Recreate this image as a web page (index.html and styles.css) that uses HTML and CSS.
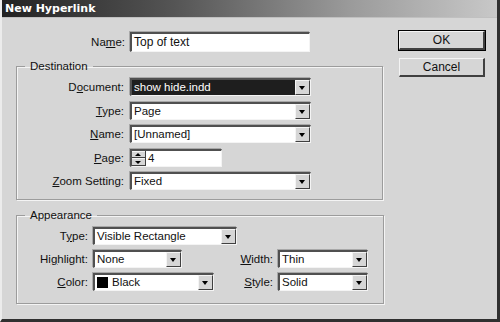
FILE: index.html
```html
<!DOCTYPE html>
<html lang="en">
<head>
    <meta charset="UTF-8">
    <title>New Hyperlink</title>
    <link rel="stylesheet" href="styles.css">
</head>
<body>
    <div class="dialog">
        <div class="titlebar">New Hyperlink</div>

        <div class="content">
            <div class="main">
                <div class="name-row">
                    <label class="label name-label">Na<u>m</u>e:</label>
                    <div class="textbox name-box">Top of text</div>
                </div>

                <fieldset class="group dest">
                    <legend>Destination</legend>
                    <div class="dest-row">
                        <label class="label">D<u>o</u>cument:</label>
                        <div class="select w-wide selected"><span>show hide.indd</span><i class="drop"></i></div>
                    </div>
                    <div class="dest-row">
                        <label class="label"><u>T</u>ype:</label>
                        <div class="select w-wide"><span>Page</span><i class="drop"></i></div>
                    </div>
                    <div class="dest-row">
                        <label class="label"><u>N</u>ame:</label>
                        <div class="select w-wide"><span>[Unnamed]</span><i class="drop"></i></div>
                    </div>
                    <div class="dest-row">
                        <label class="label"><u>P</u>age:</label>
                        <div class="spinbox">
                            <div class="spin">
                                <i class="spin-up"></i>
                                <i class="spin-down"></i>
                            </div>
                            <span>4</span>
                        </div>
                    </div>
                    <div class="dest-row">
                        <label class="label"><u>Z</u>oom Setting:</label>
                        <div class="select w-wide"><span>Fixed</span><i class="drop"></i></div>
                    </div>
                </fieldset>

                <fieldset class="group appear">
                    <legend>Appearance</legend>
                    <div class="appear-grid">
                        <label class="label">T<u>y</u>pe:</label>
                        <div class="select w-type span2"><span>Visible Rectangle</span><i class="drop"></i></div>

                        <label class="label">Hi<u>g</u>hlight:</label>
                        <div class="select w-high"><span>None</span><i class="drop"></i></div>
                        <label class="label"><u>W</u>idth:</label>
                        <div class="select w-small"><span>Thin</span><i class="drop"></i></div>

                        <label class="label"><u>C</u>olor:</label>
                        <div class="select w-color"><span><b class="swatch"></b>Black</span><i class="drop"></i></div>
                        <label class="label"><u>S</u>tyle:</label>
                        <div class="select w-small"><span>Solid</span><i class="drop"></i></div>
                    </div>
                </fieldset>
            </div>

            <div class="buttons">
                <button class="btn default">OK</button>
                <button class="btn">Cancel</button>
            </div>
        </div>
    </div>
</body>
</html>
```

FILE: styles.css
```css
body {
    margin: 0;
    font-family: 'Liberation Sans', Arial, sans-serif;
    font-size: 11.5px;
    color: #111;
    background: #d6d6d6;
}

.dialog {
    width: 500px;
    height: 322px;
    box-sizing: border-box;
    background: #d6d6d6;
    border-left: 2px solid #ececec;
    border-right: 3px solid #303030;
    border-bottom: 3px solid #303030;
    overflow: hidden;
}

.titlebar {
    height: 17px;
    line-height: 17px;
    padding-left: 3px;
    background: linear-gradient(to right, #222 0%, #555 35%, #9a9a9a 70%, #c8c8c8 100%);
    color: #fff;
    font-family: 'DejaVu Sans', sans-serif;
    font-size: 11px;
    font-weight: bold;
    border-bottom: 1px solid #c0c0c0;
}

.content {
    display: flex;
    padding-top: 14px;
}

.main {
    width: 383px;
    padding-left: 14px;
}

.label {
    text-align: right;
    white-space: nowrap;
}

u {
    text-decoration: underline;
    text-underline-offset: 1px;
}

/* name row */
.name-row {
    display: flex;
    align-items: center;
    height: 20px;
}

.name-label {
    width: 109px;
    margin-right: 5px;
}

.textbox,
.select,
.spinbox {
    box-sizing: border-box;
    background: #fff;
    border-top: 2px solid #505050;
    border-left: 2px solid #505050;
    border-right: 1px solid #f4f4f4;
    border-bottom: 1px solid #f4f4f4;
    box-shadow: -1px -1px 0 #a8a8a8;
}

.name-box {
    width: 180px;
    height: 20px;
    line-height: 17px;
    padding-left: 2px;
    font-size: 12px;
}

/* group boxes */
.group {
    margin: 0;
    border: 1px solid #9c9c9c;
    box-shadow: inset 1px 1px 0 #f4f4f4, 1px 1px 0 #f4f4f4;
    padding: 0;
}

.group legend {
    margin-left: 8px;
    padding: 0 5px;
    line-height: 14px;
}

.dest {
    margin-top: 7px;
    width: 367px;
    box-sizing: border-box;
    padding: 5px 0 9px;
    display: flex;
    flex-direction: column;
    gap: 5.5px;
}

.dest-row {
    display: flex;
    align-items: center;
    height: 18px;
}

.dest-row .label {
    width: 107px;
    margin-right: 6px;
}

.select {
    height: 18px;
    display: flex;
    align-items: center;
}

.select span {
    flex: 1;
    padding-left: 2px;
    line-height: 15px;
    white-space: nowrap;
    display: flex;
    align-items: center;
}

.select.selected span {
    background: #1e1e1e;
    color: #fff;
    height: 15px;
}

.drop {
    width: 15px;
    height: 15px;
    box-sizing: border-box;
    background: #d6d6d6;
    border-top: 1px solid #f4f4f4;
    border-left: 1px solid #f4f4f4;
    border-right: 1px solid #404040;
    border-bottom: 1px solid #404040;
    position: relative;
}

.drop::after {
    content: "";
    position: absolute;
    left: 3px;
    top: 5px;
    border-left: 3.5px solid transparent;
    border-right: 3.5px solid transparent;
    border-top: 4px solid #000;
}

.w-wide { width: 181px; }
.w-type { width: 144px; }
.w-high { width: 89px; }
.w-color { width: 121px; }
.w-small { width: 90px; }

/* page spinner */
.spinbox {
    width: 92px;
    height: 18px;
    display: flex;
    align-items: center;
}

.spinbox span {
    padding-left: 2px;
}

.spin {
    width: 13px;
    height: 15px;
    display: flex;
    flex-direction: column;
    background: #d6d6d6;
    border-right: 1px solid #404040;
}

.spin i {
    flex: 1;
    position: relative;
    border-bottom: 1px solid #404040;
    border-top: 1px solid #f4f4f4;
}

.spin-up::after,
.spin-down::after {
    content: "";
    position: absolute;
    left: 3px;
    border-left: 3px solid transparent;
    border-right: 3px solid transparent;
}

.spin-up::after {
    top: 1px;
    border-bottom: 3px solid #000;
}

.spin-down::after {
    top: 2px;
    border-top: 3px solid #000;
}

/* appearance */
.appear {
    margin-top: 8px;
    width: 368px;
    box-sizing: border-box;
    padding: 5px 0 12px;
}

.appear-grid {
    display: grid;
    grid-template-columns: 71px 139px 36px 90px;
    column-gap: 5px;
    row-gap: 5px;
    align-items: center;
}

.appear-grid .select {
    height: 18px;
}

.span2 {
    grid-column: 2 / span 3;
}

.swatch {
    display: inline-block;
    width: 11px;
    height: 11px;
    background: #000;
    margin-right: 4px;
}

/* buttons */
.buttons {
    margin-left: 0;
    padding-top: 0;
    display: flex;
    flex-direction: column;
    gap: 8px;
    margin-top: -1px;
}

.btn {
    width: 86px;
    height: 19px;
    box-sizing: border-box;
    background: #d6d6d6;
    font-family: 'Liberation Sans', Arial, sans-serif;
    font-size: 12px;
    color: #111;
    padding: 0;
    border-top: 1px solid #f4f4f4;
    border-left: 1px solid #f4f4f4;
    border-right: 2px solid #404040;
    border-bottom: 2px solid #404040;
}

.btn.default {
    outline: 1px solid #000;
}
```
